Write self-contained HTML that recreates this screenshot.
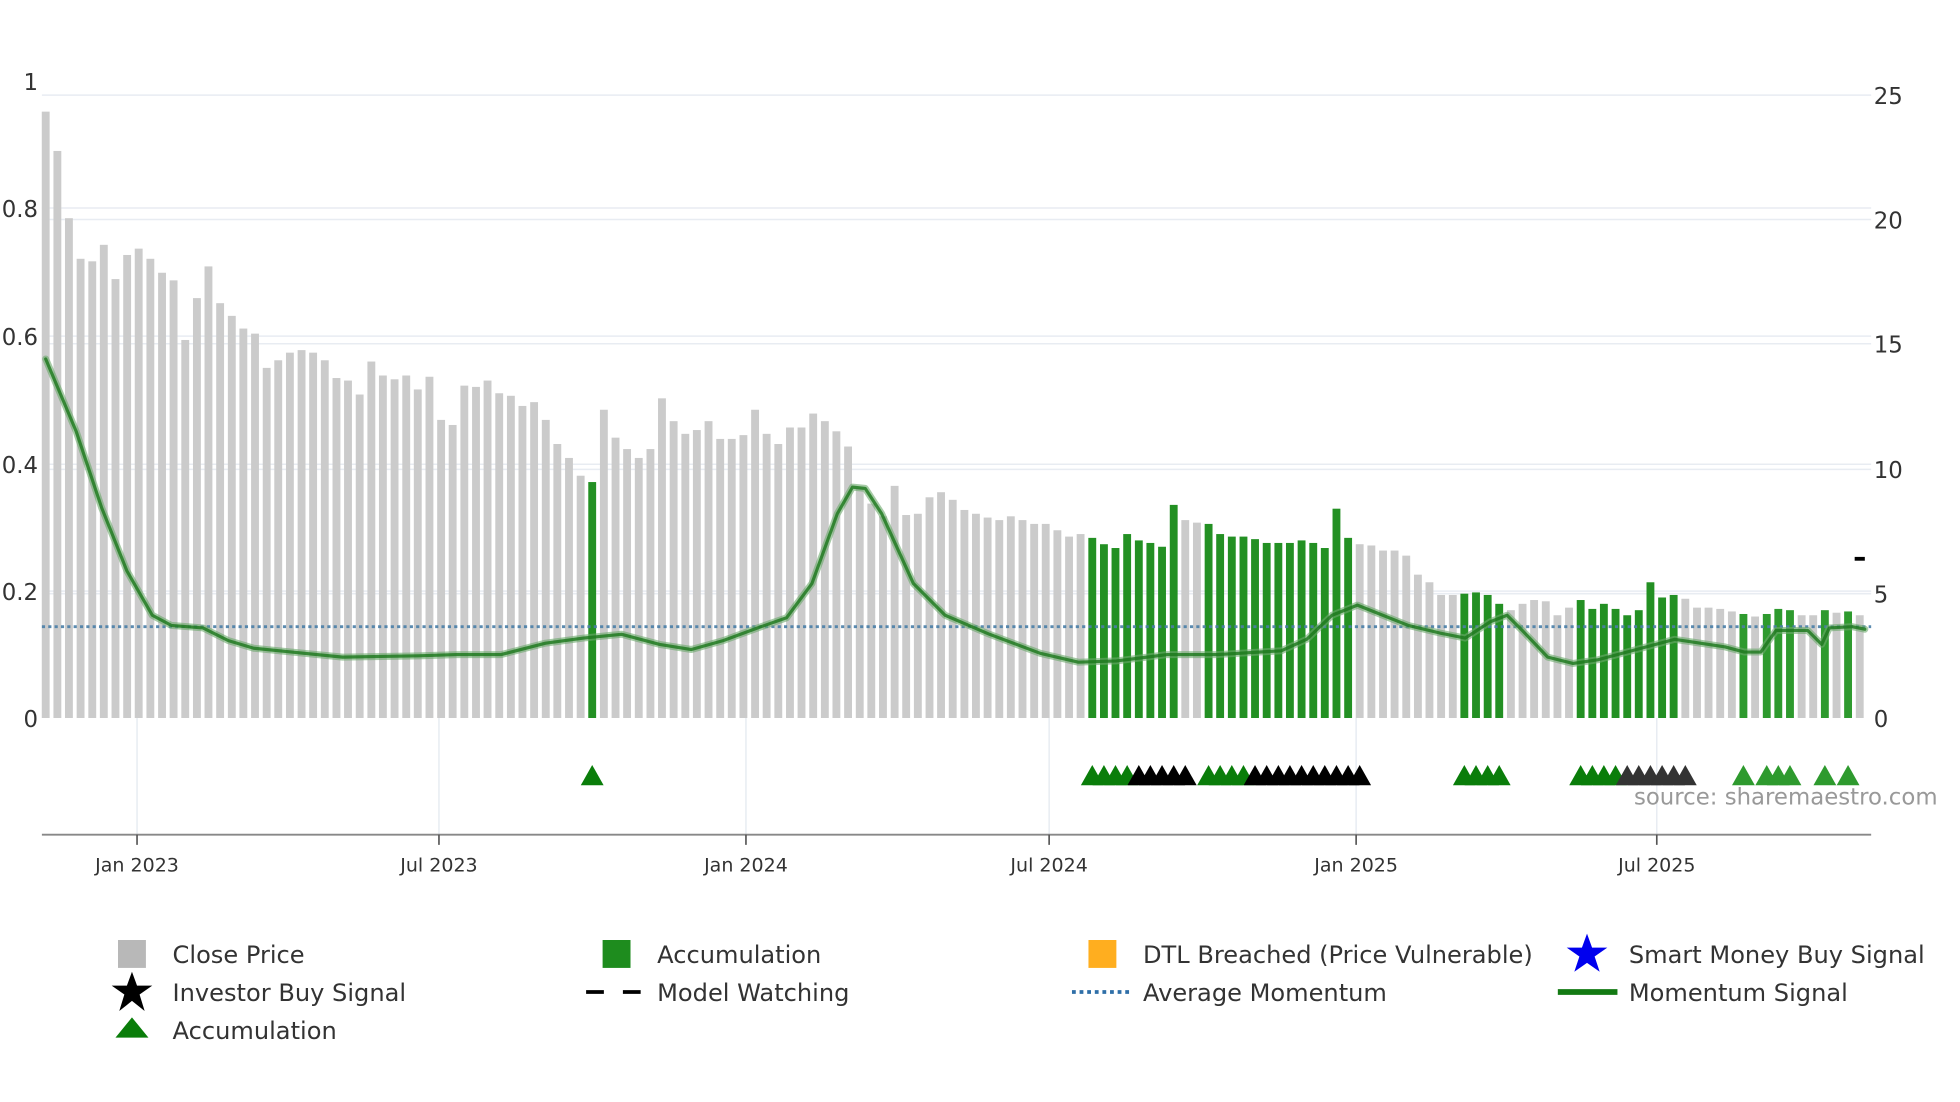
<!DOCTYPE html>
<html><head><meta charset="utf-8"><style>
html,body{margin:0;padding:0;background:#fff;width:1960px;height:1102px;overflow:hidden}
svg text{font-family:"DejaVu Sans","Liberation Sans",sans-serif;fill:#333}
</style></head><body>
<svg id="s" width="1960" height="1102" viewBox="0 0 1545 868.7" xmlns="http://www.w3.org/2000/svg">
<g stroke="#e8ecf2" stroke-width="1.2">
<line x1="33" x2="1475" y1="75" y2="75"/><line x1="33" x2="1475" y1="173" y2="173"/><line x1="33" x2="1475" y1="271" y2="271"/><line x1="33" x2="1475" y1="370" y2="370"/><line x1="33" x2="1475" y1="468" y2="468"/>
<line x1="33" x2="1475" y1="164" y2="164"/><line x1="33" x2="1475" y1="265" y2="265"/><line x1="33" x2="1475" y1="366" y2="366"/><line x1="33" x2="1475" y1="466" y2="466"/>
<line x1="108" x2="108" y1="566" y2="658"/><line x1="346" x2="346" y1="566" y2="658"/><line x1="588" x2="588" y1="566" y2="658"/><line x1="827" x2="827" y1="566" y2="658"/><line x1="1069" x2="1069" y1="566" y2="658"/><line x1="1306" x2="1306" y1="566" y2="658"/>
</g>
<g id="bars"></g>
<line x1="33" x2="1475" y1="494" y2="494" stroke="#4a7fa8" stroke-width="2.2" stroke-dasharray="2.5,2.5" opacity="0.9"/>
<polyline id="mom2" fill="none" stroke="#6aa86a" stroke-width="5.5" stroke-linejoin="round" stroke-linecap="round" opacity="0.6"/>
<polyline id="mom" fill="none" stroke="#1a771a" stroke-width="2.5" stroke-linejoin="round" stroke-linecap="round" opacity="0.8"/>
<rect x="1462" y="439" width="8" height="3" fill="#000"/>
<g id="tri"></g>
<text x="1288" y="634" style="fill:#999;font-size:18px">source: sharemaestro.com</text>
<line x1="33" x2="1475" y1="658" y2="658" stroke="#888" stroke-width="1.5"/>
<g stroke="#555" stroke-width="1.3">
<line x1="108" x2="108" y1="658" y2="666"/><line x1="346" x2="346" y1="658" y2="666"/><line x1="588" x2="588" y1="658" y2="666"/><line x1="827" x2="827" y1="658" y2="666"/><line x1="1069" x2="1069" y1="658" y2="666"/><line x1="1306" x2="1306" y1="658" y2="666"/>
</g>
<g style="font-size:15px" text-anchor="middle">
<text x="108" y="687">Jan 2023</text><text x="346" y="687">Jul 2023</text><text x="588" y="687">Jan 2024</text><text x="827" y="687">Jul 2024</text><text x="1069" y="687">Jan 2025</text><text x="1306" y="687">Jul 2025</text>
</g>
<g style="font-size:18px" text-anchor="end">
<text x="30" y="71">1</text><text x="30" y="171">0.8</text><text x="30" y="272">0.6</text><text x="30" y="373">0.4</text><text x="30" y="473">0.2</text><text x="30" y="573">0</text>
</g>
<g style="font-size:18px">
<text x="1477" y="82">25</text><text x="1477" y="180">20</text><text x="1477" y="278">15</text><text x="1477" y="377">10</text><text x="1477" y="475">5</text><text x="1477" y="573">0</text>
</g>
<g style="font-size:19px">
<rect x="93" y="741" width="22" height="22" fill="#b8b8b8"/><text x="136" y="759">Close Price</text>
<rect x="475" y="741" width="22" height="22" fill="#1e8c1e"/><text x="518" y="759">Accumulation</text>
<rect x="858" y="741" width="22" height="22" fill="#ffae1f"/><text x="901" y="759">DTL Breached (Price Vulnerable)</text>
<polygon points="1251,736 1255,747 1267,747 1257,754 1261,766 1251,759 1241,766 1245,754 1235,747 1247,747" fill="#0000ee"/><text x="1284" y="759">Smart Money Buy Signal</text>
<polygon points="104,766 108,777 120,777 110,784 114,797 104,789 94,797 98,784 88,777 100,777" fill="#000"/><text x="136" y="789">Investor Buy Signal</text>
<line x1="462" x2="476" y1="782" y2="782" stroke="#000" stroke-width="3"/><line x1="491" x2="505" y1="782" y2="782" stroke="#000" stroke-width="3"/><text x="518" y="789">Model Watching</text>
<line x1="845" x2="890" y1="782" y2="782" stroke="#2f6fa8" stroke-width="3" stroke-dasharray="3,3"/><text x="901" y="789">Average Momentum</text>
<line x1="1228" x2="1275" y1="782" y2="782" stroke="#137a13" stroke-width="4.5"/><text x="1284" y="789">Momentum Signal</text>
<polygon points="104,802 117,818 91,818" fill="#0a7d0a"/><text x="136" y="819">Accumulation</text>
</g>
</svg>
<script>
var tops=[88,119,172,204,206,193,220,201,196,204,215,221,268,235,210,239,249,259,263,290,284,278,276,278,284,298,300,311,285,296,299,296,307,297,331,335,304,305,300,310,312,320,317,331,350,361,375,380,323,345,354,361,354,314,332,342,339,332,346,346,343,323,342,350,337,337,326,332,340,352,385,397,407,383,406,405,392,388,394,402,405,408,410,407,410,413,413,418,423,421,424,429,432,421,426,428,431,398,410,412,413,421,423,423,425,428,428,428,426,428,432,401,424,429,430,434,434,438,453,459,469,469,468,467,469,476,481,476,473,474,485,479,473,480,476,480,485,481,459,471,469,472,479,479,480,482,484,486,484,480,481,485,485,481,483,482,485];
var green=[47];function rg(a,b){for(var i=a;i<=b;i++)green.push(i);}
rg(90,97);rg(100,112);rg(122,125);rg(132,140);green.push(146);rg(148,150);green.push(153);green.push(155);
var h="";
function bx(i){return 36+i*(1466-36)/156;}
for(var i=0;i<tops.length;i++){var g=green.indexOf(i)>=0;var x=bx(i);
h+='<rect x="'+(x-3.1).toFixed(1)+'" y="'+tops[i]+'" width="6.2" height="'+(566-tops[i])+'" fill="'+(g?(i>=146?'#2e9a2e':'#239023'):'#cbcbcb')+'"/>';}
document.getElementById('bars').innerHTML=h;
var pts=[[36,283],[60,340],[80,400],[100,450],[120,485],[135,493],[160,495],[180,505],[200,511],[230,514],[270,518],[330,517],[360,516],[395,516],[430,507],[460,503],[490,500],[520,508],[545,512],[570,505],[600,494],[620,487],[640,460],[660,405],[672,384],[682,385],[695,405],[720,460],[745,485],[780,500],[820,515],[850,522],[880,521],[920,516],[960,516],[1010,513],[1030,504],[1050,485],[1070,477],[1090,485],[1110,493],[1135,499],[1155,503],[1175,490],[1188,485],[1200,497],[1220,518],[1240,523],[1260,520],[1290,512],[1320,504],[1360,510],[1375,514],[1388,514],[1400,497],[1425,497],[1436,508],[1442,495],[1460,494],[1470,496]];
var ps=pts.map(function(p){return p.join(',')}).join(' ');
document.getElementById('mom').setAttribute('points',ps);
document.getElementById('mom2').setAttribute('points',ps);
var t="";function tri(i,c){var x=bx(i);t+='<polygon points="'+x.toFixed(1)+',603 '+(x+9).toFixed(1)+',619 '+(x-9).toFixed(1)+',619" fill="'+c+'"/>';}
tri(47,'#0a7d0a');
for(var i=90;i<=93;i++)tri(i,'#0a7d0a');for(i=94;i<=98;i++)tri(i,'#000');
for(i=100;i<=103;i++)tri(i,'#0a7d0a');for(i=104;i<=113;i++)tri(i,'#000');
for(i=122;i<=125;i++)tri(i,'#0a7d0a');
for(i=132;i<=135;i++)tri(i,'#0a7d0a');for(i=136;i<=141;i++)tri(i,'#333');
[146,148,149,150,153,155].forEach(function(i){tri(i,'#2e9a2e');});
document.getElementById('tri').innerHTML=t;
</script>
</body></html>
